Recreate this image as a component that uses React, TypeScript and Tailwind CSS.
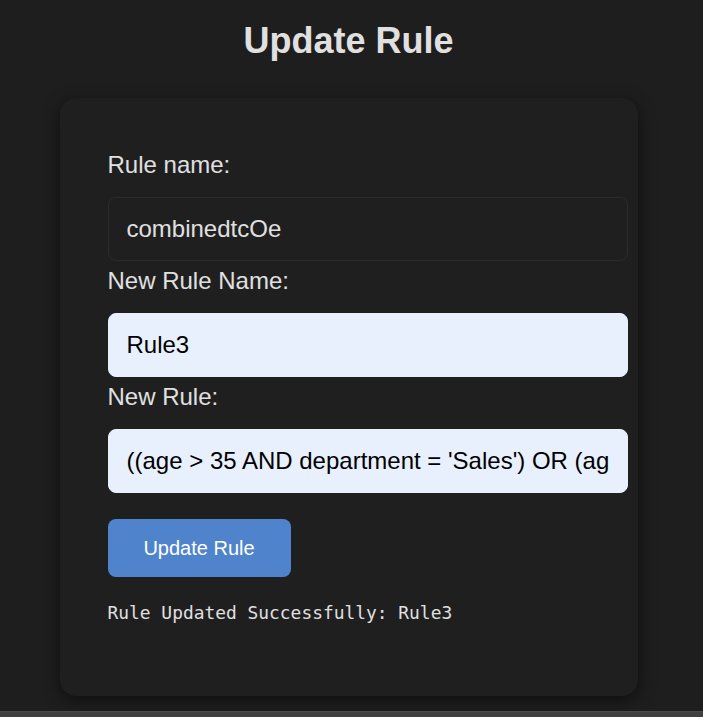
import React from "react";

export default function App() {
  const sans = { fontFamily: '"Liberation Sans", Arial, sans-serif' };
  return (
    <div className="h-[717px] w-[703px] flex flex-col bg-[#1e1e1e] overflow-hidden" style={sans}>
      <div className="flex-1 w-[697px] flex flex-col items-center">
        <h1 className="mt-[20px] text-[36px] leading-[42px] font-bold text-[#e0e0e0]">Update Rule</h1>
        <div className="mt-[36px] w-[578px] h-[598px] rounded-[16px] bg-[#1f1f1f] shadow-[0_4px_16px_rgba(0,0,0,0.55)] pl-[48px] pt-[53px] flex flex-col items-start">
          <label className="text-[24px] leading-[28px] text-[#e0e0e0]">Rule name:</label>
          <div className="mt-[18px] w-[520px] h-[64px] shrink-0 rounded-[8px] border border-[#2c2c2c] bg-[#1f1f1f] px-[18px] flex items-center text-[24px] text-[#e0e0e0]">
            <span className="flex-1 min-w-0 overflow-hidden whitespace-nowrap">combinedtcOe</span>
          </div>
          <label className="mt-[6px] text-[24px] leading-[28px] text-[#e0e0e0]">New Rule Name:</label>
          <div className="mt-[18px] w-[520px] h-[64px] shrink-0 rounded-[8px] border border-[#e8f0fe] bg-[#e8f0fe] px-[18px] flex items-center text-[24px] text-black">
            <span className="flex-1 min-w-0 overflow-hidden whitespace-nowrap">Rule3</span>
          </div>
          <label className="mt-[6px] text-[24px] leading-[28px] text-[#e0e0e0]">New Rule:</label>
          <div className="mt-[18px] w-[520px] h-[64px] shrink-0 rounded-[8px] border border-[#e8f0fe] bg-[#e8f0fe] px-[18px] flex items-center text-[24px] text-black">
            <span className="flex-1 min-w-0 overflow-hidden whitespace-nowrap">
              ((age &gt; 35 AND department = 'Sales') OR (ag
            </span>
          </div>
          <button className="mt-[26px] w-[183px] h-[58px] rounded-[8px] bg-[#4f84cc] text-white text-[20px] leading-[24px]">
            Update Rule
          </button>
          <p
            className="mt-[26px] text-[17.9px] leading-[20px] text-[#e0e0e0] whitespace-nowrap"
            style={{ fontFamily: '"DejaVu Sans Mono", "Liberation Mono", monospace' }}
          >
            Rule Updated Successfully: Rule3
          </p>
        </div>
      </div>
      <div className="h-[6px] shrink-0 bg-[#404040] border-t border-[#4a4a4a]" />
    </div>
  );
}
